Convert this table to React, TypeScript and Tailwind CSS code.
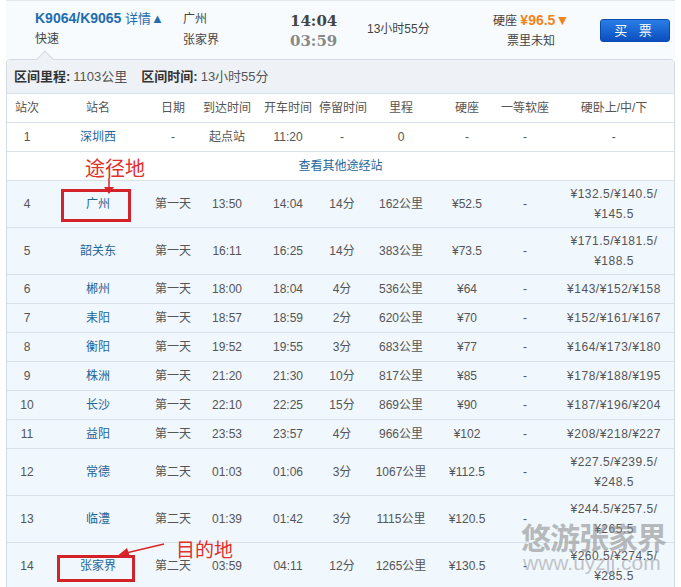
type Cell = string | string[];

const COLS =
  'grid grid-cols-[40px_102px_48px_60px_62px_46px_72px_60px_56px_122px]';

const head = ['站次', '站名', '日期', '到达时间', '开车时间', '停留时间', '里程', '硬座', '一等软座', '硬卧上/中/下'];

const stops: Cell[][] = [
  ['4', '广州', '第一天', '13:50', '14:04', '14分', '162公里', '¥52.5', '-', ['¥132.5/¥140.5/', '¥145.5']],
  ['5', '韶关东', '第一天', '16:11', '16:25', '14分', '383公里', '¥73.5', '-', ['¥171.5/¥181.5/', '¥188.5']],
  ['6', '郴州', '第一天', '18:00', '18:04', '4分', '536公里', '¥64', '-', '¥143/¥152/¥158'],
  ['7', '耒阳', '第一天', '18:57', '18:59', '2分', '620公里', '¥70', '-', '¥152/¥161/¥167'],
  ['8', '衡阳', '第一天', '19:52', '19:55', '3分', '683公里', '¥77', '-', '¥164/¥173/¥180'],
  ['9', '株洲', '第一天', '21:20', '21:30', '10分', '817公里', '¥85', '-', '¥178/¥188/¥195'],
  ['10', '长沙', '第一天', '22:10', '22:25', '15分', '869公里', '¥90', '-', '¥187/¥196/¥204'],
  ['11', '益阳', '第一天', '23:53', '23:57', '4分', '966公里', '¥102', '-', '¥208/¥218/¥227'],
  ['12', '常德', '第二天', '01:03', '01:06', '3分', '1067公里', '¥112.5', '-', ['¥227.5/¥239.5/', '¥248.5']],
  ['13', '临澧', '第二天', '01:39', '01:42', '3分', '1115公里', '¥120.5', '-', ['¥244.5/¥257.5/', '¥265.5']],
  ['14', '张家界', '第二天', '03:59', '04:11', '12分', '1265公里', '¥130.5', '-', ['¥260.5/¥274.5/', '¥285.5']],
];

function Row({ cells, bg, header }: { cells: Cell[]; bg: string; header?: boolean }) {
  const tall = cells.some((c) => Array.isArray(c));
  return (
    <div className={`${COLS} ${tall ? 'h-[47px]' : 'h-[29px]'} ${bg} border-b border-[#d9e2ea] items-center text-[12px] text-[#555]`}>
      {cells.map((c, i) => (
        <div
          key={i}
          className={`text-center leading-[20px] whitespace-nowrap ${i === 1 && !header ? 'text-[#1f659a]' : ''} ${i === 9 && !header ? 'tracking-[0.5px]' : ''}`}
        >
          {Array.isArray(c) ? (
            <>
              {c[0]}
              <br />
              {c[1]}
            </>
          ) : (
            c
          )}
        </div>
      ))}
    </div>
  );
}

export default function App() {
  return (
    <div className="relative w-[681px] h-[587px] overflow-hidden bg-white font-['Liberation_Sans','Noto_Sans_CJK_SC',sans-serif]">
      {/* train summary bar */}
      <div className="flex h-[59px] mx-[6px] bg-[#f7fbfd] border-t border-[#e1e7ec] text-[12px] text-[#444]">
        <div className="w-[29px]" />
        <div className="w-[148px] pt-[7px] leading-[20px]">
          <div>
            <span className="text-[14px] font-bold text-[#1f6db0]">K9064/K9065</span>
            <span className="text-[13px] text-[#1f6db0]"> 详情▲</span>
          </div>
          <div className="text-[#444]">快速</div>
        </div>
        <div className="w-[107px] pt-[8px] leading-[21px]">
          <div>广州</div>
          <div>张家界</div>
        </div>
        <div className="w-[77px] pt-[10px] leading-[20px] font-['DejaVu_Serif',serif] font-bold text-[15px]">
          <div className="text-[#444]">14:04</div>
          <div className="text-[#888]">03:59</div>
        </div>
        <div className="w-[126px] pt-[18px] leading-[20px]">13小时55分</div>
        <div className="w-[107px] pt-[9px]">
          <div className="inline-flex flex-col items-center leading-[20px]">
            <div>
              硬座 <span className="text-[14px] font-bold text-[#f0841c]">¥96.5▼</span>
            </div>
            <div>票里未知</div>
          </div>
        </div>
        <div className="mt-[18px] w-[70px] h-[23px] rounded-[3px] bg-gradient-to-b from-[#2a7ee6] to-[#0b4fbf] border border-[#0a4ab0] flex items-center justify-center text-white text-[13px] tracking-[4px]">
          买 票
        </div>
      </div>

      {/* stop table */}
      <div className="relative mx-[6px] border border-[#d3dce4] rounded-t-[4px]">
        <div className="absolute left-[32px] -top-[7px] w-[12px] h-[12px] rotate-45 bg-[#eef2f6] border-l border-t border-[#d3dce4]" />
        <div className="relative h-[34px] bg-[#eef2f6] border-b border-[#d9e2ea] flex items-center px-[7px] text-[13px] text-[#555] rounded-t-[4px]">
          <span className="font-bold text-[#333]">区间里程:</span>
          <span className="ml-[3px]">1103公里</span>
          <span className="ml-[14px] font-bold text-[#333]">区间时间:</span>
          <span className="ml-[3px]">13小时55分</span>
        </div>
        <Row cells={head} bg="bg-white" header />
        <Row cells={['1', '深圳西', '-', '起点站', '11:20', '-', '0', '-', '-', '-']} bg="bg-white" />
        <div className="h-[29px] border-b border-[#d9e2ea] flex items-center justify-center text-[12px] text-[#1f659a]">
          查看其他途经站
        </div>
        {stops.map((s, i) => (
          <Row key={i} cells={s} bg="bg-[#f0f7fd]" />
        ))}
      </div>

      {/* annotations */}
      <div className="absolute left-[85px] top-[156px] text-[20px] leading-[24px] text-[#e0302c] font-['Noto_Sans_CJK_SC',sans-serif]">
        途径地
      </div>
      <svg className="absolute left-[100px] top-[178px]" width="18" height="18" viewBox="0 0 18 18">
        <line x1="9" y1="0" x2="9" y2="10" stroke="#d9242a" strokeWidth="1.5" />
        <polygon points="4,9 14,9 9,16" fill="#d9242a" />
      </svg>
      <div className="absolute left-[61px] top-[189px] w-[70px] h-[33px] border-[3px] border-[#d3222a]" />

      <div className="absolute left-[176px] top-[537px] text-[19px] leading-[24px] text-[#e0302c] font-['Noto_Sans_CJK_SC',sans-serif]">
        目的地
      </div>
      <svg className="absolute left-[112px] top-[540px]" width="56" height="22" viewBox="0 0 56 22">
        <line x1="52" y1="4" x2="14" y2="13" stroke="#d9242a" strokeWidth="1.5" />
        <polygon points="4,17 15,8 18,17" fill="#d9242a" />
      </svg>
      <div className="absolute left-[57px] top-[555px] w-[78px] h-[27px] border-[3px] border-[#d3222a]" />

      {/* watermark */}
      <div className="absolute left-[521px] top-[518px] text-[30px] leading-[36px] font-bold text-[#8f8f8f]/60 tracking-[-1px] font-['Noto_Sans_CJK_SC',sans-serif]">
        悠游张家界
      </div>
      <div className="absolute left-[523px] top-[551px] text-[21px] leading-[24px] text-[#8f8f8f]/50">
        www.uyzjj.com
      </div>
    </div>
  );
}
